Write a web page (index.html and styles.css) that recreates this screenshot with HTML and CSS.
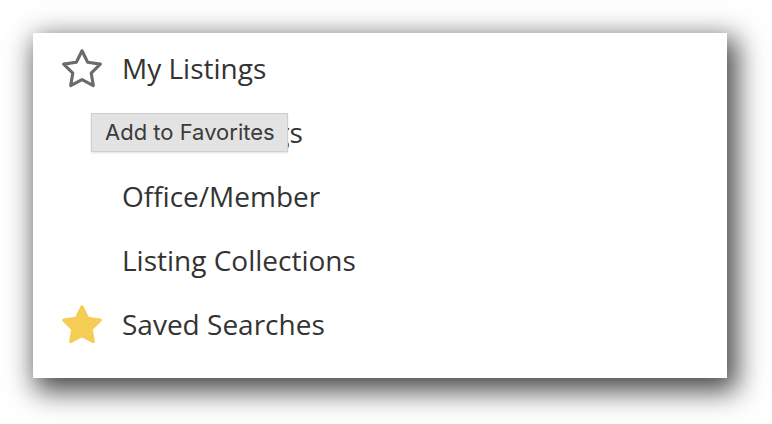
FILE: index.html
```html
<!DOCTYPE html>
<html>
<head>
<meta charset="utf-8">
<link rel="stylesheet" href="styles.css">
</head>
<body>
<div class="card">
  <ul class="menu">
    <li class="item">
      <span class="icon">
        <svg viewBox="0 0 24 24" width="44" height="44"><polygon class="star-outline" points="12 2.6 15.09 8.86 22 9.87 17 14.74 18.18 21.62 12 18.37 5.82 21.62 7 14.74 2 9.87 8.91 8.86"/></svg>
      </span>
      <span class="label">My Listings</span>
    </li>
    <li class="item">
      <span class="icon"></span>
      <span class="label">Agent Listings</span>
    </li>
    <li class="item">
      <span class="icon"></span>
      <span class="label">Office/Member</span>
    </li>
    <li class="item">
      <span class="icon"></span>
      <span class="label">Listing Collections</span>
    </li>
    <li class="item">
      <span class="icon">
        <svg viewBox="0 0 24 24" width="44" height="44"><polygon class="star-filled" points="12 2.6 15.09 8.86 22 9.87 17 14.74 18.18 21.62 12 18.37 5.82 21.62 7 14.74 2 9.87 8.91 8.86"/></svg>
      </span>
      <span class="label">Saved Searches</span>
    </li>
  </ul>
  <div class="tooltip">Add to Favorites</div>
</div>
</body>
</html>
```
FILE: styles.css
```css
html, body {
  margin: 0;
  padding: 0;
  background: #ffffff;
}
body {
  box-sizing: border-box;
  min-height: 424px;
  padding: 33px 0 0 33px;
  font-family: "Open Sans", "Noto Sans", sans-serif;
}
.card {
  position: relative;
  width: 694px;
  height: 345px;
  box-sizing: border-box;
  background: #ffffff;
  box-shadow: 6px 9px 26px 4px rgba(0, 0, 0, 0.72);
  padding: 3px 0 22px 27px;
}
.menu {
  list-style: none;
  margin: 0;
  padding: 0;
}
.item {
  display: flex;
  align-items: center;
  height: 64px;
  gap: 19px;
}
.icon {
  width: 44px;
  height: 44px;
  display: flex;
  align-items: center;
  justify-content: center;
}
.icon svg {
  display: block;
}
.star-outline {
  fill: none;
  stroke: #6b6b6b;
  stroke-width: 1.7;
  stroke-linejoin: round;
}
.star-filled {
  fill: #f5cd55;
  stroke: #f5cd55;
  stroke-width: 1.7;
  stroke-linejoin: round;
}
.label {
  font-size: 28px;
  line-height: 64px;
  color: #333333;
  margin-left: -1px;
}
.tooltip {
  position: absolute;
  left: 58px;
  top: 80px;
  width: 197px;
  height: 39px;
  box-sizing: border-box;
  background: #e3e3e3;
  border: 1px solid #cfcfcf;
  box-shadow: 0 1px 2px rgba(0, 0, 0, 0.12);
  font-family: "Inter", "Liberation Sans", sans-serif;
  font-size: 22px;
  line-height: 37px;
  color: #3b3b3b;
  padding-left: 13px;
}
```
